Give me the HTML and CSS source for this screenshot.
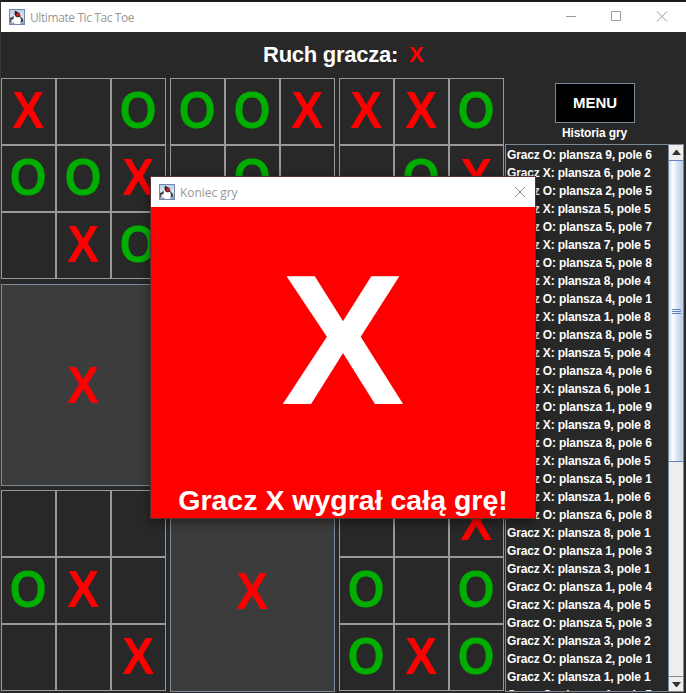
FILE: index.html
```html
<!DOCTYPE html>
<html lang="pl">
<head>
<meta charset="utf-8">
<title>Ultimate Tic Tac Toe</title>
<link rel="stylesheet" href="styles.css">
</head>
<body>
<svg width="0" height="0" class="defs">
  <defs>
    <linearGradient id="bg" x1="0" y1="0" x2="0" y2="1"><stop offset="0" stop-color="#b9cbe2"/><stop offset=".5" stop-color="#dfe6ee"/><stop offset="1" stop-color="#8299b8"/></linearGradient>
    <symbol id="duke" viewBox="0 0 16 16">
      <rect x=".5" y=".5" width="15" height="15" fill="url(#bg)" stroke="#7388a8"/>
      <path d="M1 9l4-2h6l3 3v3H1z" fill="#44464c"/>
      <path d="M5 7l2-1 4 2 1 3-1 4H6l-2-3z" fill="#fff"/>
      <path d="M2 11l3-1 1 3-3 1z" fill="#f2f2f2"/>
      <path d="M6 1.500l1.500 1L10.500 4l1 3-2.500 1.500-2.500-1L5.500 5z" fill="#26262b"/>
      <circle cx="9" cy="5.800" r="1.800" fill="#e02020"/>
    </symbol>
  </defs>
</svg>
<div class="window">
  <header class="titlebar">
    <svg class="app-icon"><use href="#duke"/></svg>
    <span class="title main-title">Ultimate Tic Tac Toe</span>
    <svg class="controls" width="120" height="30" fill="none" stroke="#999"><path d="M0 14.500h10M45.500 9.500h9v9h-9zM91 9.500l10 10M101 9.500l-10 10"/></svg>
  </header>
  <div class="turn"><span class="turn-label">Ruch gracza:</span><span class="turn-mark">X</span></div>
  <main class="content">
    <div class="boards" id="boards"></div>
    <aside class="side">
      <button class="menu">MENU</button>
      <div class="side-title">Historia gry</div>
      <div class="history">
        <ul class="moves" id="moves"></ul>
        <div class="scroll">
          <div class="arrow"><svg width="9" height="5"><path d="M0 5 4 0h1l4 5z" fill="#333"/></svg></div>
          <div class="track"><div class="thumb"><i></i><i></i><i></i></div></div>
          <div class="arrow down"><svg width="9" height="5"><path d="M0 0h9L5 5H4z" fill="#333"/></svg></div>
        </div>
      </div>
    </aside>
  </main>
</div>
<section class="dialog">
  <header class="dialog-bar">
    <svg class="app-icon"><use href="#duke"/></svg>
    <span class="title">Koniec gry</span>
    <svg class="close" width="10" height="10" stroke="#888"><path d="M0 0l10 10M10 0 0 10"/></svg>
  </header>
  <div class="result">
    <div class="winner">X</div>
    <div class="message">Gracz X wygrał całą grę!</div>
  </div>
</section>
<script src="app.js"></script>
</body>
</html>
```
FILE: styles.css
```css
* { box-sizing: border-box; }
body { margin: 0; width: 686px; height: 693px; overflow: hidden; background: #282828; font-family: "Liberation Sans", Arial, sans-serif; font-weight: bold; }
.defs { position: absolute; }
.window { height: 693px; border-left: 1px solid #3a3634; border-top: 2px solid #1f1c1f; display: flex; flex-direction: column; }
.titlebar { height: 30px; background: #fff; display: flex; align-items: center; padding-left: 8px; flex: none; }
.app-icon { width: 16px; height: 16px; flex: none; }
.title { font: 12px "Open Sans", sans-serif; color: #999; margin-left: 5px; letter-spacing: -.05px; }
.main-title { letter-spacing: -.4px; }
.controls { margin-left: auto; }
.turn { height: 46px; flex: none; display: flex; align-items: center; padding-left: 262px; font-size: 22px; color: #fff; }
.turn-label { width: 146px; white-space: nowrap; letter-spacing: -.25px; }
.turn-mark { color: #f00; }
.content { display: flex; }
.boards { width: 503px; height: 615px; display: grid; grid-template-columns: repeat(3, 165px); grid-template-rows: repeat(3, 202px); gap: 4px; align-content: start; flex: none; }
.board { display: grid; grid-template-columns: repeat(3, 55px); grid-template-rows: repeat(3, 67px); }
.cell { border: 1px solid #999; display: flex; align-items: center; justify-content: center; }
.mark { font-size: 51.5px; line-height: 60px; transform: scaleX(.93); }
.cell .mark { margin-top: -3px; }
.x { color: #f00; }
.o { color: #00ae00; }
.won { background: #3c3c3c; border: 1px solid #7a8a99; display: flex; align-items: center; justify-content: center; }
.side { width: 180px; height: 615px; display: flex; flex-direction: column; align-items: center; padding: 5px 0 0 1px; }
.menu { width: 80px; height: 40px; background: #000; border: 1px solid #7a8a99; color: #fff; font: bold 15px "Liberation Sans", Arial, sans-serif; padding: 0 0 2px 1px; flex: none; }
.side-title { font-size: 12px; line-height: 21px; color: #fff; height: 21px; flex: none; letter-spacing: -.15px; }
.history { width: 179px; height: 548px; border: 1px solid #7a8a99; display: flex; overflow: hidden; flex: none; }
.moves { list-style: none; margin: 0; padding: 1px 0 0 1px; flex: 1; overflow: hidden; font-size: 12px; line-height: 18px; color: #fff; white-space: nowrap; letter-spacing: -.15px; }
.scroll { width: 15px; border-left: 1px solid #7a8a99; background: #eee; display: flex; flex-direction: column; flex: none; }
.arrow { height: 15px; display: flex; align-items: center; justify-content: center; flex: none; }
.down { border-top: 1px solid #7a8a99; }
.track { flex: 1; }
.thumb { height: 302px; border: 1px solid #6382bf; border-left: 0; border-right: 0; background: linear-gradient(90deg, #c8ddf2, #fff 30%, #dbe7f4 55%, #b8cfe5); display: flex; flex-direction: column; align-items: center; justify-content: center; gap: 1px; }
.thumb i { width: 9px; height: 1px; background: #6382bf; }
.dialog { position: absolute; left: 150px; top: 176px; width: 386px; height: 343px; border: 1px solid #5a3030; box-shadow: 0 3px 10px rgba(0,0,0,.45); }
.dialog-bar { height: 30px; background: #fff; display: flex; align-items: center; padding: 0 10px 0 8px; }
.close { margin-left: auto; }
.result { height: 311px; background: #f00; color: #fff; display: flex; flex-direction: column; align-items: center; }
.winner { height: 276px; font-size: 185px; line-height: 267px; }
.message { font-size: 28.5px; line-height: 36px; white-space: nowrap; }
```
FILE: app.js
```js
const boards = ["X.OOOX.XO", "OOX.O....", "XXO.OX...", "#", ".........", ".........", "...OX...X", "#", "..XO.OOXO"];
const mark = c => c === "." ? "" : `<span class="mark ${c.toLowerCase()}">${c}</span>`;
document.getElementById("boards").innerHTML = boards.map(b => b === "#"
  ? `<div class="won">${mark("X")}</div>`
  : `<div class="board">${[...b].map(c => `<div class="cell">${mark(c)}</div>`).join("")}</div>`).join("");
const moves = "96 62 25 55 57 75 58 84 41 18 85 54 46 61 19 98 86 65 51 16 68 81 13 31 14 45 53 32 21 11 15".split(" ");
document.getElementById("moves").innerHTML = moves.map((m, i) =>
  `<li>Gracz ${i % 2 ? "X" : "O"}: plansza ${m[0]}, pole ${m[1]}</li>`).join("");
```
